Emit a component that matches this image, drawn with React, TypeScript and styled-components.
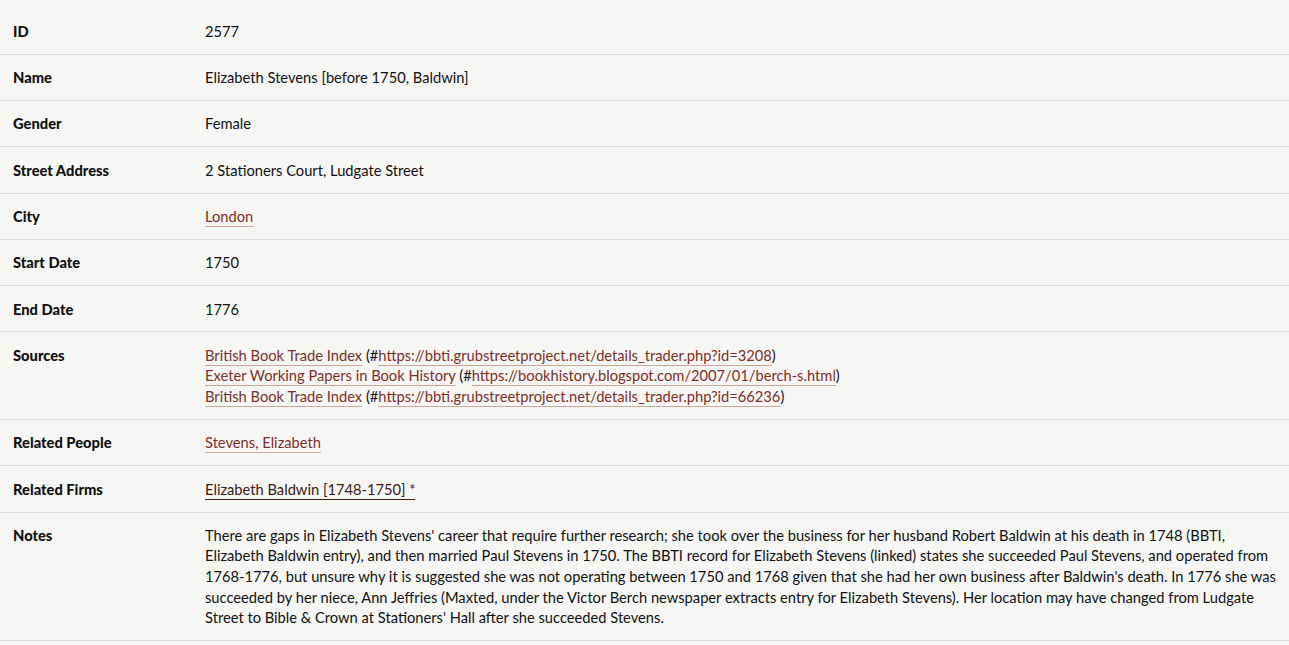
import React from 'react';
import styled, { createGlobalStyle } from 'styled-components';

const GlobalStyle = createGlobalStyle`
  body {
    margin: 0;
    background: #f6f7f5;
    font-family: Lato, "Open Sans", sans-serif;
    font-size: 14.7px;
    color: #111;
  }
`;

interface Source {
  title: string;
  url: string;
}

const sources: Source[] = [
  { title: 'British Book Trade Index', url: 'https://bbti.grubstreetproject.net/details_trader.php?id=3208' },
  { title: 'Exeter Working Papers in Book History', url: 'https://bookhistory.blogspot.com/2007/01/berch-s.html' },
  { title: 'British Book Trade Index', url: 'https://bbti.grubstreetproject.net/details_trader.php?id=66236' },
];

const notes =
  "There are gaps in Elizabeth Stevens' career that require further research; she took over the business for her husband Robert Baldwin at his death in 1748 (BBTI, Elizabeth Baldwin entry), and then married Paul Stevens in 1750. The BBTI record for Elizabeth Stevens (linked) states she succeeded Paul Stevens, and operated from 1768-1776, but unsure why it is suggested she was not operating between 1750 and 1768 given that she had her own business after Baldwin's death. In 1776 she was succeeded by her niece, Ann Jeffries (Maxted, under the Victor Berch newspaper extracts entry for Elizabeth Stevens). Her location may have changed from Ludgate Street to Bible & Crown at Stationers' Hall after she succeeded Stevens.";

function App(): JSX.Element {
  return (
    <>
      <GlobalStyle />
      <SDetails>
        <Row label="ID">2577</Row>
        <Row label="Name">Elizabeth Stevens [before 1750, Baldwin]</Row>
        <Row label="Gender">Female</Row>
        <Row label="Street Address">2 Stationers Court, Ludgate Street</Row>
        <Row label="City">
          <SLink href="#">London</SLink>
        </Row>
        <Row label="Start Date">1750</Row>
        <Row label="End Date">1776</Row>
        <Row label="Sources">
          {sources.map((s, i) => (
            <SSourceLine key={i}>
              <SLink href="#">{s.title}</SLink> (#<SLink href="#">{s.url}</SLink>)
            </SSourceLine>
          ))}
        </Row>
        <Row label="Related People">
          <SLink href="#">Stevens, Elizabeth</SLink>
        </Row>
        <Row label="Related Firms">
          <SLink href="#" visited>
            Elizabeth Baldwin [1748-1750] *
          </SLink>
        </Row>
        <Row label="Notes">{notes}</Row>
      </SDetails>
    </>
  );
}

function Row({ label, children }: { label: string; children: React.ReactNode }): JSX.Element {
  return (
    <SRow>
      <SLabel>{label}</SLabel>
      <SValue>{children}</SValue>
    </SRow>
  );
}

export default App;

const SDetails = styled.div`
  display: flex;
  flex-direction: column;
  padding-top: 8.5px;
`;

const SRow = styled.div`
  display: grid;
  grid-template-columns: 192px 1fr;
  border-bottom: 1px solid #dcdde3;
  padding: 12.35px 6px 12.35px 13px;
  line-height: 20.6px;
`;

const SLabel = styled.div`
  font-weight: 900;
`;

const SValue = styled.div``;

const SSourceLine = styled.div``;

const SLink = styled.a<{ visited?: boolean }>`
  color: ${({ visited }) => (visited ? '#3a2012' : '#7d2f27')};
  text-decoration: none;
  padding-bottom: 1px;
  border-bottom: 1px solid ${({ visited }) => (visited ? '#3a2012' : '#cfa595')};
`;
